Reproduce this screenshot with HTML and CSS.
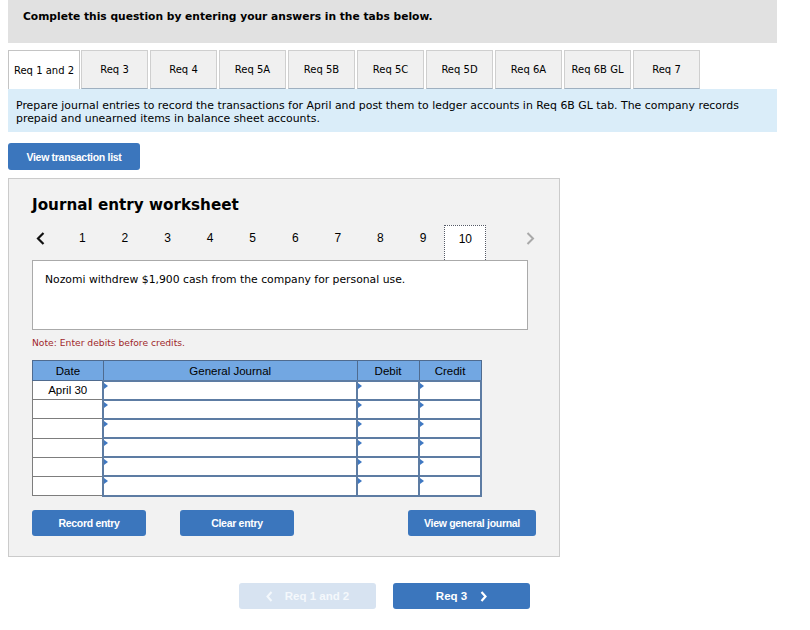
FILE: index.html
```html
<!DOCTYPE html>
<html>
<head>
  <meta charset="utf-8">
  <title>Journal entry worksheet</title>
  <link rel="stylesheet" href="styles.css">
</head>
<body>
  <div class="page">
    <div class="header">Complete this question by entering your answers in the tabs below.</div>

    <div class="tabs">
      <span class="tab active">Req 1 and 2</span>
      <span class="tab">Req 3</span>
      <span class="tab">Req 4</span>
      <span class="tab">Req 5A</span>
      <span class="tab">Req 5B</span>
      <span class="tab">Req 5C</span>
      <span class="tab">Req 5D</span>
      <span class="tab">Req 6A</span>
      <span class="tab">Req 6B GL</span>
      <span class="tab">Req 7</span>
    </div>

    <div class="info">Prepare journal entries to record the transactions for April and post them to ledger accounts in Req 6B GL tab. The company records prepaid and unearned items in balance sheet accounts.</div>

    <a class="btn btn-list">View transaction list</a>

    <div class="worksheet">
      <h2 class="title">Journal entry worksheet</h2>

      <div class="pager">
        <span class="arrow prev">
          <svg width="9" height="13" viewBox="0 0 9 13"><polyline points="7.5,1 2,6.5 7.5,12" fill="none" stroke="#111" stroke-width="2.2"/></svg>
        </span>
        <span class="num">1</span>
        <span class="num">2</span>
        <span class="num">3</span>
        <span class="num">4</span>
        <span class="num">5</span>
        <span class="num">6</span>
        <span class="num">7</span>
        <span class="num">8</span>
        <span class="num">9</span>
        <span class="num current">10</span>
        <span class="arrow next">
          <svg width="9" height="13" viewBox="0 0 9 13"><polyline points="1.5,1 7,6.5 1.5,12" fill="none" stroke="#a9a9a9" stroke-width="2"/></svg>
        </span>
      </div>

      <div class="desc">Nozomi withdrew $1,900 cash from the company for personal use.</div>

      <div class="note">Note: Enter debits before credits.</div>

      <table class="journal">
        <thead>
          <tr>
            <th class="c-date">Date</th>
            <th class="c-acct">General Journal</th>
            <th class="c-num">Debit</th>
            <th class="c-num">Credit</th>
          </tr>
        </thead>
        <tbody>
          <tr><td class="date">April 30</td><td class="cell"></td><td class="cell"></td><td class="cell"></td></tr>
          <tr><td class="date"></td><td class="cell"></td><td class="cell"></td><td class="cell"></td></tr>
          <tr><td class="date"></td><td class="cell"></td><td class="cell"></td><td class="cell"></td></tr>
          <tr><td class="date"></td><td class="cell"></td><td class="cell"></td><td class="cell"></td></tr>
          <tr><td class="date"></td><td class="cell"></td><td class="cell"></td><td class="cell"></td></tr>
          <tr><td class="date"></td><td class="cell"></td><td class="cell"></td><td class="cell"></td></tr>
        </tbody>
      </table>

      <div class="actions">
        <a class="btn btn-record">Record entry</a>
        <a class="btn btn-clear">Clear entry</a>
        <a class="btn btn-general">View general journal</a>
      </div>
    </div>

    <div class="nav">
      <a class="btn nav-btn disabled">
        <svg class="chev chev-left" width="7" height="11" viewBox="0 0 7 11"><polyline points="5.5,1 1.5,5.5 5.5,10" fill="none" stroke="#f4f8fc" stroke-width="2"/></svg>
        Req 1 and 2
      </a>
      <a class="btn nav-btn">
        Req 3
        <svg class="chev chev-right" width="7" height="11" viewBox="0 0 7 11"><polyline points="1.5,1 5.5,5.5 1.5,10" fill="none" stroke="#fff" stroke-width="2.2"/></svg>
      </a>
    </div>
  </div>
</body>
</html>
```

FILE: styles.css
```css
* {
  box-sizing: border-box;
}
body {
  margin: 0;
  font-family: "DejaVu Sans", Verdana, sans-serif;
  color: #000;
  background: #fff;
}
.page {
  width: 777px;
  padding-left: 8px;
}
.header {
  height: 43px;
  background: #e1e1e1;
  padding: 10px 0 0 15px;
  font-size: 10.7px;
  font-weight: bold;
}
.tabs {
  display: flex;
  margin-top: 7px;
  height: 39px;
}
.tab {
  width: 67px;
  margin-right: 2px;
  display: flex;
  align-items: center;
  justify-content: center;
  font-size: 10px;
  background: #f0f0f0;
  border: 1px solid #cfcfcf;
  border-bottom: 1px solid #9fb0c0;
}
.tab.active {
  width: 72px;
  margin-right: 1px;
  background: #fff;
  border-color: #c4c4c4;
  border-bottom: none;
}
.info {
  height: 43px;
  background: #daedf9;
  padding: 10px 8px 0 8px;
  font-size: 10.9px;
  line-height: 13px;
}
.btn {
  display: flex;
  align-items: center;
  justify-content: center;
  background: #3b76bd;
  color: #fff;
  border-radius: 3px;
  font-family: "Liberation Sans", Arial, sans-serif;
  font-weight: bold;
  font-size: 10.5px;
  letter-spacing: -0.3px;
}
.btn-list {
  width: 132px;
  height: 27px;
  margin-top: 11px;
}
.worksheet {
  width: 552px;
  height: 379px;
  margin-top: 8px;
  background: #f2f2f2;
  border: 1px solid #cbcbcb;
  padding: 15px 0 0 23px;
}
.title {
  margin: 0;
  font-size: 15.2px;
  font-weight: bold;
  line-height: 22px;
}
.pager {
  display: flex;
  align-items: flex-start;
  height: 35px;
  margin-top: 9px;
  font-family: "Liberation Sans", Arial, sans-serif;
  font-size: 12px;
}
.pager .num {
  width: 42.6px;
  text-align: center;
  line-height: 27px;
}
.pager .arrow {
  display: flex;
  align-items: center;
  height: 27px;
}
.pager .prev {
  width: 29px;
  padding-left: 4px;
}
.pager .next {
  margin-left: 40px;
}
.pager .current {
  width: 42px;
  height: 35px;
  line-height: 27px;
  background: #fff;
  border: 1px dotted #555a66;
  border-bottom: none;
}
.desc {
  width: 496px;
  height: 70px;
  background: #fff;
  border: 1px solid #aaa;
  padding: 12px 12px;
  font-size: 10.8px;
}
.note {
  margin-top: 7px;
  font-size: 9.2px;
  color: #a0282c;
}
.journal {
  margin-top: 12px;
  width: 450px;
  border-collapse: collapse;
  font-family: "Liberation Sans", Arial, sans-serif;
  font-size: 11.5px;
}
.journal th {
  height: 20px;
  background: #72a7e2;
  border: 1px solid #4f6b8f;
  font-weight: normal;
  padding: 1px 0 0 0;
}
.journal .c-date {
  width: 71px;
}
.journal .c-acct {
  width: 254px;
}
.journal .c-num {
  width: 62px;
}
.journal td {
  height: 19.2px;
  padding: 0;
  background: #fff;
}
.journal .date {
  text-align: center;
  border: 1px solid #7d7d7d;
}
.journal .cell {
  position: relative;
  border: 2px solid #5d7ca3;
}
.journal .cell::before {
  content: "";
  position: absolute;
  left: 0;
  top: 1px;
  border-left: 4px solid #3f78c2;
  border-top: 3px solid transparent;
  border-bottom: 3px solid transparent;
}
.actions {
  display: flex;
  margin-top: 13px;
}
.actions .btn {
  height: 26px;
}
.btn-record {
  width: 114px;
}
.btn-clear {
  width: 114px;
  margin-left: 34px;
}
.btn-general {
  width: 128px;
  margin-left: 114px;
}
.nav {
  display: flex;
  gap: 17px;
  margin: 26px 0 0 231px;
}
.nav-btn {
  width: 137px;
  height: 26px;
  font-size: 11.5px;
  letter-spacing: 0;
}
.nav-btn.disabled {
  background: #d7e3f1;
  color: #f4f8fc;
}
.chev-left {
  margin-right: 12px;
}
.chev-right {
  margin-left: 13px;
}
```
